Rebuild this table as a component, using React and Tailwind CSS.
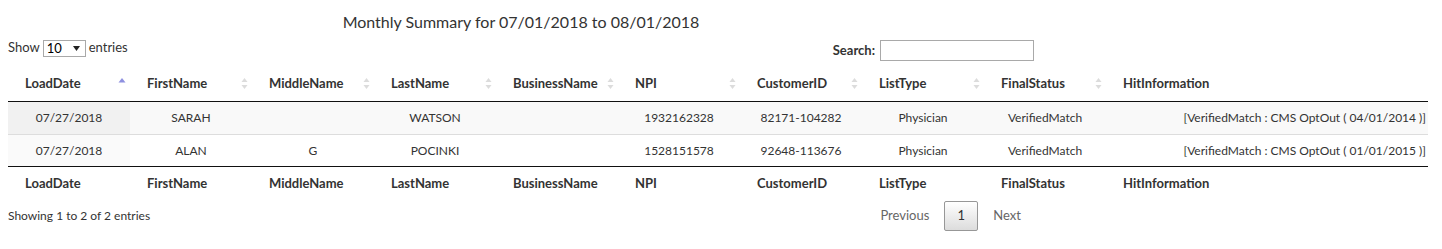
import React from 'react';

const columns = [
  'LoadDate',
  'FirstName',
  'MiddleName',
  'LastName',
  'BusinessName',
  'NPI',
  'CustomerID',
  'ListType',
  'FinalStatus',
  'HitInformation',
];

const rows = [
  ['07/27/2018', 'SARAH', '', 'WATSON', '', '1932162328', '82171-104282', 'Physician', 'VerifiedMatch', '[VerifiedMatch : CMS OptOut ( 04/01/2014 )]'],
  ['07/27/2018', 'ALAN', 'G', 'POCINKI', '', '1528151578', '92648-113676', 'Physician', 'VerifiedMatch', '[VerifiedMatch : CMS OptOut ( 01/01/2015 )]'],
];

const gridCols = 'grid grid-cols-[122px_122px_122px_122px_122px_122px_122px_122px_122px_322px]';

function SortIcon({ active }) {
  if (active) {
    return (
      <svg width="8" height="12" viewBox="0 0 8 12" className="mb-[2px]">
        <path d="M0.5 5.5 L4 1 L7.5 5.5 Z" fill="#8e90e0" />
      </svg>
    );
  }
  return (
    <svg width="7" height="13" viewBox="0 0 7 13">
      <path d="M0.5 5 L3.5 1 L6.5 5 Z" fill="#dcdcdc" />
      <path d="M0.5 8 L3.5 12 L6.5 8 Z" fill="#dcdcdc" />
    </svg>
  );
}

export default function App() {
  return (
    <div className="min-h-[249px] bg-white px-2 text-[13px] text-[#333] font-['Lato','Liberation_Sans',sans-serif]">
      <div className="w-[1026px]">
        <div className="pt-[12px] text-center text-[16px] leading-[20px] text-[#333]">
          Monthly Summary for 07/01/2018 to 08/01/2018
        </div>
        <div className="mt-[6px] flex h-[28px] items-start justify-between">
          <div className="flex h-[20px] items-center">
            <span>Show</span>
            <div className="mx-[3px] flex h-[17px] w-[43px] items-center justify-between border border-[#a9a9a9] bg-white pl-[3px] pr-[5px] leading-none text-black">
              <span>10</span>
              <svg width="7" height="5" viewBox="0 0 7 5">
                <path d="M0 0 H7 L3.5 5 Z" fill="#222" />
              </svg>
            </div>
            <span>entries</span>
          </div>
          <div className="mt-[2px] flex items-center">
            <span className="font-bold">Search:</span>
            <div className="ml-[5px] h-[21px] w-[154px] border border-[#a9a9a9] bg-white" />
          </div>
        </div>
      </div>

      <div className="w-[1420px]">
        <div className={`${gridCols} h-[36px] border-b border-[#111] font-bold`}>
          {columns.map((c, i) => (
            <div key={c} className="flex items-center justify-between pl-[17px] pr-[4px]">
              <span>{c}</span>
              {i < 9 && <SortIcon active={i === 0} />}
            </div>
          ))}
        </div>

        {rows.map((r, ri) => (
          <div
            key={ri}
            className={`${gridCols} text-[12px] ${ri === 0 ? 'h-[33px] border-b border-[#ddd] bg-[#f9f9f9]' : 'h-[31px] bg-white'}`}
          >
            {r.map((v, ci) => (
              <div
                key={ci}
                className={`flex items-center ${ci === 9 ? 'justify-end pr-[2px]' : 'justify-center'} ${
                  ci === 0 ? (ri === 0 ? 'bg-[#f1f1f1]' : 'bg-[#fafafa]') : ''
                }`}
              >
                {v}
              </div>
            ))}
          </div>
        ))}

        <div className={`${gridCols} h-[35px] border-t border-[#111] font-bold`}>
          {columns.map((c) => (
            <div key={c} className="flex items-center pl-[17px]">
              {c}
            </div>
          ))}
        </div>
      </div>

      <div className="flex h-[30px] w-[1026px] items-center justify-between">
        <span className="text-[12px]">Showing 1 to 2 of 2 entries</span>
        <div className="flex items-center">
          <span className="px-[13px] text-[#666]">Previous</span>
          <span className="ml-[2px] flex h-[30px] w-[34px] items-center justify-center rounded-[2px] border border-[#979797] bg-gradient-to-b from-white to-[#dcdcdc] text-[#333]">
            1
          </span>
          <span className="ml-[2px] px-[13px] text-[#666]">Next</span>
        </div>
      </div>
    </div>
  );
}
